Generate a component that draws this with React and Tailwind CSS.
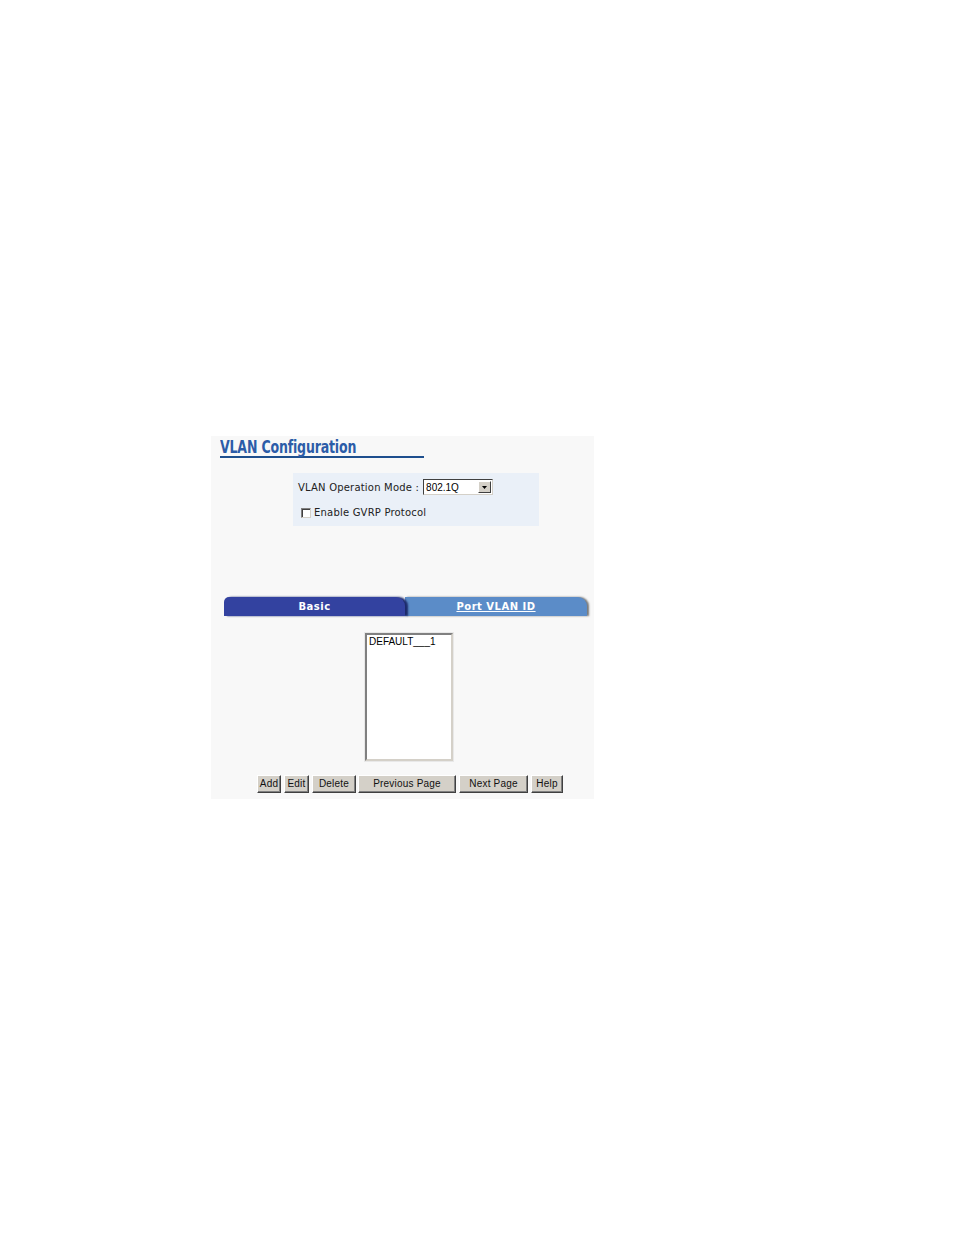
import React from "react";

const verd = { fontFamily: '"DejaVu Sans", Verdana, sans-serif' };
const arial = { fontFamily: '"Liberation Sans", Arial, sans-serif' };

function Btn({ children, w }) {
  return (
    <button
      className={`h-[18px] ${w} shrink-0 bg-[#d4d0c8] border border-t-white border-l-white border-r-[#404040] border-b-[#404040] shadow-[inset_-1px_-1px_0_#808080] text-[10px] text-[#111] leading-none flex items-center justify-center tracking-[0.2px] overflow-hidden whitespace-nowrap`}
      style={arial}
    >
      {children}
    </button>
  );
}

export default function App() {
  return (
    <div className="min-h-[1235px] bg-white pt-[436px] pl-[211px]">
      <div className="w-[383px] h-[363px] bg-[#f8f8f8] flex flex-col">
        <div className="pl-[9px] pt-[5px]">
          <div className="w-[204px] h-[17px] border-b-2 border-[#1e4f8e] flex items-end overflow-visible">
            <span
              className="text-[17px] font-bold text-[#2c5ca8] leading-[17px] tracking-[-0.2px] inline-block origin-left scale-x-[0.82] whitespace-nowrap"
              style={{ fontFamily: '"DejaVu Sans Condensed", "DejaVu Sans", sans-serif' }}
            >
              VLAN Configuration
            </span>
          </div>
        </div>

        <div className="ml-[82px] mt-[15px] w-[246px] h-[53px] bg-[#eaf0f8] flex flex-col pl-[5px] pt-[6px] text-[10px] text-[#222]" style={verd}>
          <div className="flex items-center h-[16px]">
            <span className="tracking-[0.2px]">VLAN Operation Mode :</span>
            <div className="ml-[4px] w-[70px] h-[16px] bg-white border border-t-[#404040] border-l-[#404040] border-r-[#d4d0c8] border-b-[#d4d0c8] flex items-center">
              <span className="flex-1 pl-[2px] text-[10px] text-black" style={arial}>802.1Q</span>
              <div className="w-[13px] h-[12px] mr-[1px] bg-[#d4d0c8] border border-t-white border-l-white border-r-[#404040] border-b-[#404040] flex items-center justify-center">
                <svg width="5" height="3" viewBox="0 0 5 3"><path d="M0 0h5L2.5 3z" fill="#000" /></svg>
              </div>
            </div>
          </div>
          <div className="flex items-center mt-[10px] pl-[3px]">
            <div className="w-[10px] h-[10px] bg-white border border-t-[#808080] border-l-[#808080] border-r-[#d4d0c8] border-b-[#d4d0c8] shadow-[inset_1px_1px_0_#404040]"></div>
            <span className="ml-[3px] tracking-[0.2px]">Enable GVRP Protocol</span>
          </div>
        </div>

        <div className="ml-[13px] mt-[71px] w-[363px] h-[19px] flex" style={verd}>
          <div className="w-[181px] h-full bg-[#3342a0] rounded-tl-[5px] rounded-tr-[9px] flex items-center justify-center text-[10px] font-bold text-white tracking-[0.5px] relative z-10 shadow-[3px_0_2px_#1c2a6a]">
            Basic
          </div>
          <div className="flex-1 h-full bg-[#5b8cc8] rounded-tr-[9px] flex items-center justify-center text-[10px] font-bold text-white tracking-[0.5px] underline shadow-[2px_0_2px_#777]">
            Port VLAN ID
          </div>
        </div>

        <div className="ml-[154px] mt-[17px] w-[88px] h-[128px] bg-white border-2 border-t-[#808080] border-l-[#808080] border-r-[#d4d0c8] border-b-[#d4d0c8] outline outline-1 outline-[#e8e8e8]">
          <div className="pl-[2px] pt-[1px] text-[10px] leading-[12px] text-black" style={arial}>DEFAULT___1</div>
        </div>

        <div className="mt-[14px] pl-[46px] flex">
          <Btn w="w-[24px]">Add</Btn>
          <div className="w-[3px]" />
          <Btn w="w-[25px]">Edit</Btn>
          <div className="w-[3px]" />
          <Btn w="w-[44px]">Delete</Btn>
          <div className="w-[2px]" />
          <Btn w="w-[98px]">Previous Page</Btn>
          <div className="w-[3px]" />
          <Btn w="w-[69px]">Next Page</Btn>
          <div className="w-[3px]" />
          <Btn w="w-[32px]">Help</Btn>
        </div>
      </div>
    </div>
  );
}
